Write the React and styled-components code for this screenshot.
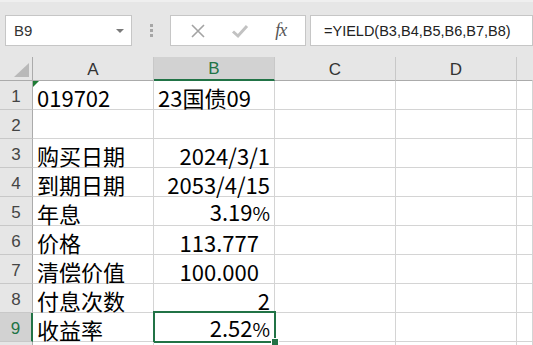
import React from 'react';
import styled, { createGlobalStyle } from 'styled-components';

const GlobalStyle = createGlobalStyle`
body {
  margin: 0;
  background: #ffffff;
  overflow: hidden;
}
`

const Page = styled.div`
width: 533px;
height: 345px;
overflow: hidden;
font-family: "Noto Sans CJK SC", "Noto Sans", sans-serif;
`

const Toolbar = styled.div`
display: flex;
align-items: center;
height: 57px;
box-sizing: border-box;
padding: 14px 0 12px 5px;
background: #e6e6e6;
border-top: 2px solid #efefef;
`

const NameBox = styled.div`
display: flex;
align-items: center;
justify-content: space-between;
box-sizing: border-box;
width: 127px;
height: 31px;
padding: 0 7px 0 8px;
background: #ffffff;
border: 1px solid #c6c6c6;
font-family: "Liberation Sans", sans-serif;
font-size: 15px;
color: #333;
`

const Caret = styled.span`
width: 0;
height: 0;
border-left: 4px solid transparent;
border-right: 4px solid transparent;
border-top: 4px solid #7a7a7a;
`

const Grip = styled.div`
display: flex;
flex-direction: column;
align-items: center;
gap: 2px;
width: 38px;
`

const GripDot = styled.span`
width: 3px;
height: 3px;
background: #a6a6a6;
`

const FuncBox = styled.div`
display: flex;
align-items: center;
justify-content: space-around;
box-sizing: border-box;
width: 136px;
height: 31px;
padding: 0 6px;
background: #ffffff;
border: 1px solid #c6c6c6;
`

const Fx = styled.span`
font-family: "Liberation Serif", serif;
font-style: italic;
font-size: 18px;
color: #555;
letter-spacing: -1px;
`

const FormulaBox = styled.div`
flex: 1;
display: flex;
align-items: center;
box-sizing: border-box;
height: 31px;
margin-left: 4px;
padding-left: 13px;
background: #ffffff;
border: 1px solid #c6c6c6;
font-family: "Liberation Sans", sans-serif;
font-size: 14.5px;
color: #222;
white-space: nowrap;
`

const Sheet = styled.div`
display: grid;
grid-template-columns: 33px 121px 121px 121px 121px 1fr;
grid-template-rows: 24px;
grid-auto-rows: 29px;
`

const Corner = styled.div`
position: relative;
box-sizing: border-box;
background: #e6e6e6;
border-right: 1px solid #ababab;
border-bottom: 1px solid #ababab;

&::after {
  content: "";
  position: absolute;
  right: 3px;
  bottom: 3px;
  width: 0;
  height: 0;
  border-left: 15px solid transparent;
  border-bottom: 14px solid #b9b9b9;
}
`

const ColHead = styled.div`
display: flex;
align-items: center;
justify-content: center;
box-sizing: border-box;
padding-top: 2px;
background: ${p => (p.$active ? '#d2d2d2' : '#e6e6e6')};
border-right: 1px solid ${p => (p.$last ? 'transparent' : '#c8c8c8')};
border-bottom: ${p => (p.$active ? '2px solid #217346' : '1px solid #ababab')};
font-family: "Liberation Sans", sans-serif;
font-size: 17px;
color: ${p => (p.$active ? '#217346' : '#333')};
`

const RowHead = styled.div`
display: flex;
align-items: flex-end;
justify-content: center;
box-sizing: border-box;
padding-bottom: 2px;
background: ${p => (p.$active ? '#d2d2d2' : '#e6e6e6')};
border-right: ${p => (p.$active ? '2px solid #217346' : '1px solid #ababab')};
border-bottom: 1px solid #c8c8c8;
font-family: "Liberation Sans", sans-serif;
font-size: 17px;
line-height: 20px;
color: ${p => (p.$active ? '#217346' : '#444')};
`

const Cell = styled.div`
position: relative;
display: flex;
align-items: flex-end;
justify-content: ${p => (p.$right ? 'flex-end' : 'flex-start')};
box-sizing: border-box;
padding: 0 ${p => (p.$pad ? '15px' : '4px')} 1px 4px;
border-right: 1px solid #d4d4d4;
border-bottom: 1px solid #d4d4d4;
font-size: 22px;
line-height: 22px;
color: #000;
white-space: nowrap;

${p => p.$flag && `
  &::before {
    content: "";
    position: absolute;
    left: 0;
    top: 0;
    width: 0;
    height: 0;
    border-top: 6px solid #1e7b34;
    border-right: 6px solid transparent;
  }
`}

${p => p.$selected && `
  &::after {
    content: "";
    position: absolute;
    top: -2px;
    left: -1px;
    right: -2px;
    bottom: -2px;
    border: 2px solid #217346;
    pointer-events: none;
  }
  &::before {
    content: "";
    position: absolute;
    right: -5px;
    bottom: -5px;
    width: 6px;
    height: 6px;
    background: #217346;
    border: 1px solid #ffffff;
    z-index: 2;
  }
`}
`

const Percent = styled.span`
font-size: 19px;
`

const rows = [
  ['019702', '23国债09', false],
  ['', '', false],
  ['购买日期', '2024/3/1', true],
  ['到期日期', '2053/4/15', true],
  ['年息', '3.19%', true],
  ['价格', '113.777', true, true],
  ['清偿价值', '100.000', true, true],
  ['付息次数', '2', true],
  ['收益率', '2.52%', true],
]

function Value ({ text }) {
  if (text.endsWith('%')) {
    return <span>{text.slice(0, -1)}<Percent>%</Percent></span>
  }
  return <span>{text}</span>
}

function App () {
  return (
    <Page>
      <GlobalStyle />
      <Toolbar>
        <NameBox>
          <span>B9</span>
          <Caret />
        </NameBox>
        <Grip>
          <GripDot />
          <GripDot />
          <GripDot />
        </Grip>
        <FuncBox>
          <svg width="16" height="16" viewBox="0 0 16 16">
            <path d="M2 2 L14 14 M14 2 L2 14" stroke="#a3a3a3" strokeWidth="1.6" fill="none" />
          </svg>
          <svg width="18" height="16" viewBox="0 0 18 16">
            <path d="M2 8.5 L7 13 L16 3" stroke="#c2c2c2" strokeWidth="3" fill="none" />
          </svg>
          <Fx>fx</Fx>
        </FuncBox>
        <FormulaBox>=YIELD(B3,B4,B5,B6,B7,B8)</FormulaBox>
      </Toolbar>
      <Sheet>
        <Corner />
        <ColHead>A</ColHead>
        <ColHead $active>B</ColHead>
        <ColHead>C</ColHead>
        <ColHead>D</ColHead>
        <ColHead $last />
        {rows.map((r, i) => (
          <React.Fragment key={i}>
            <RowHead $active={i === 8}>{i + 1}</RowHead>
            <Cell $flag={i === 0}>{r[0]}</Cell>
            <Cell $right={r[2]} $pad={r[3]} $selected={i === 8}><Value text={r[1]} /></Cell>
            <Cell />
            <Cell />
            <Cell />
          </React.Fragment>
        ))}
        <RowHead />
        <Cell />
        <Cell />
        <Cell />
        <Cell />
        <Cell />
      </Sheet>
    </Page>
  )
}

export default App;
